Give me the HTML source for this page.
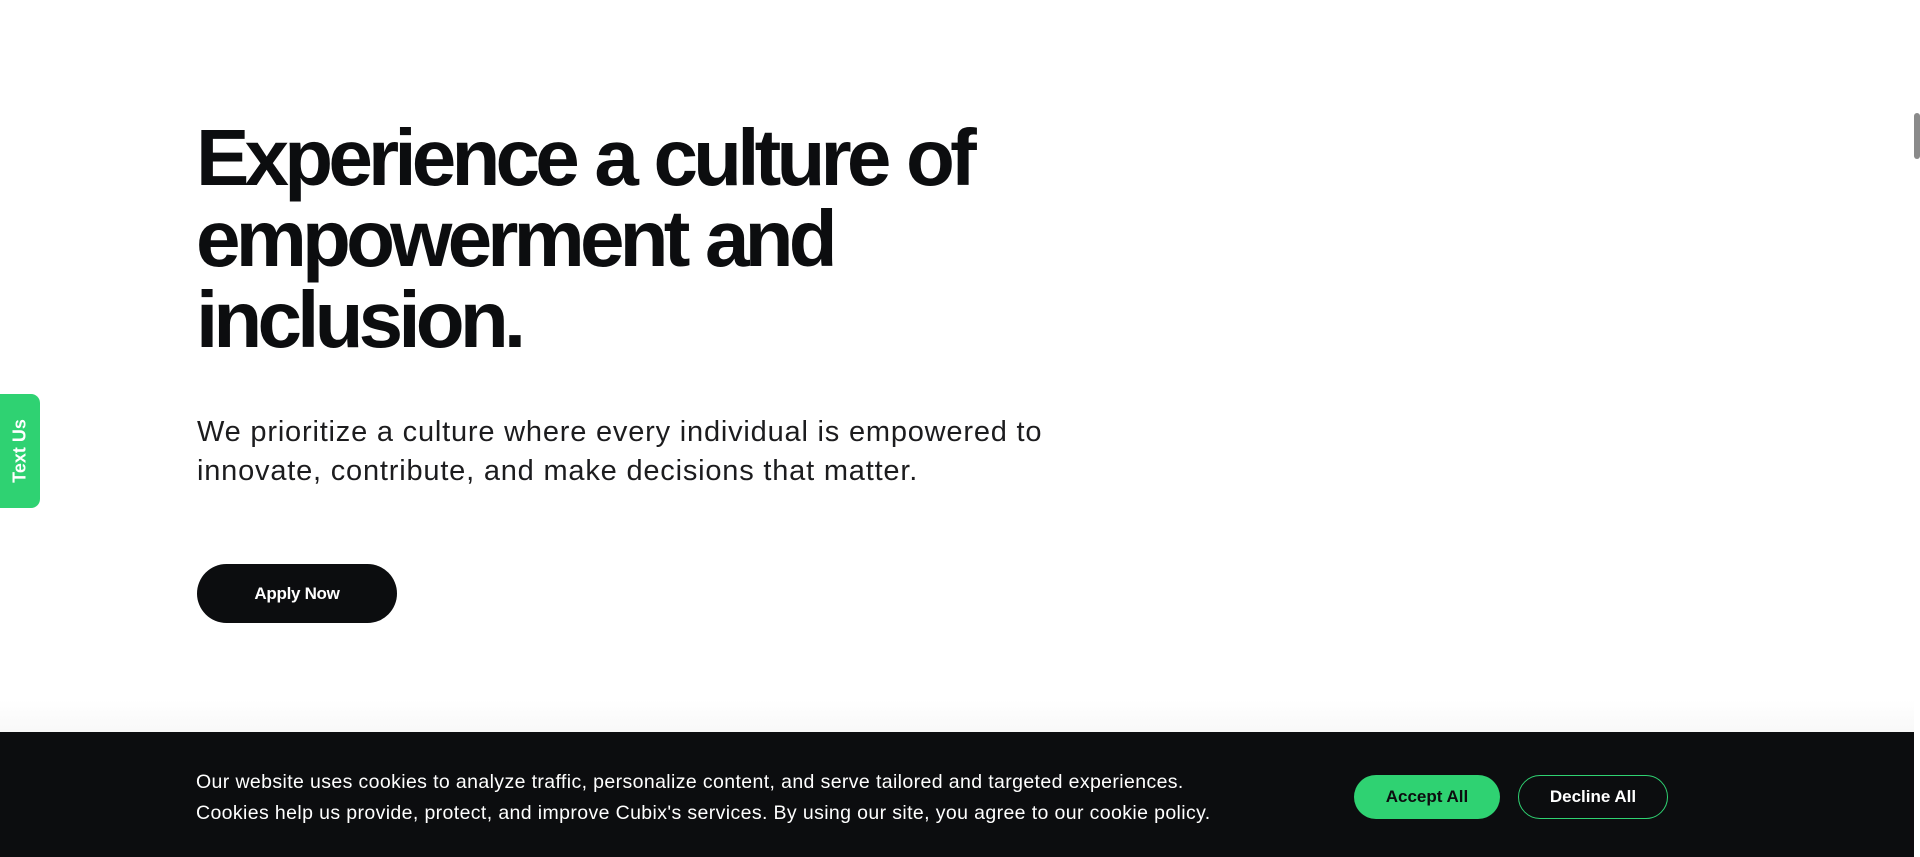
<!DOCTYPE html>
<html><head><meta charset="utf-8"><style>
html,body{margin:0;padding:0;width:1920px;height:857px;overflow:hidden;background:#fff;font-family:"Liberation Sans",sans-serif;}
.h{position:absolute;left:196px;top:117px;margin:0;font-size:80px;line-height:81px;font-weight:700;letter-spacing:-4.8px;word-spacing:2px;color:#0c0d0f;}
.p{position:absolute;left:197px;top:413px;margin:0;font-size:29px;line-height:39px;color:#1c1c1e;letter-spacing:0.8px;}
.btn{position:absolute;left:197px;top:564px;width:200px;height:59px;border-radius:30px;background:#0c0d0f;color:#fff;font-weight:700;font-size:17px;display:flex;align-items:center;justify-content:center;letter-spacing:-0.3px;}
.tab{position:absolute;left:0;top:394px;width:40px;height:114px;background:#2fd272;border-radius:0 9px 9px 0;}
.tab span{position:absolute;left:50%;top:50%;transform:translate(-50%,-50%) rotate(-90deg);color:#fff;font-weight:700;font-size:18px;white-space:nowrap;}
.sb{position:absolute;left:1914px;top:113px;width:6px;height:46px;background:#8a8a8a;border-radius:3px;}
.shadow{position:absolute;left:0;top:700px;width:1914px;height:32px;background:linear-gradient(#fff,#f8f8f8);}
.ck{position:absolute;left:0;top:732px;width:1914px;height:125px;background:#0c0d0f;}
.ck p{position:absolute;left:196px;top:35px;margin:0;color:#fff;font-size:19.5px;line-height:31px;letter-spacing:0.38px;}
.acc{position:absolute;left:1354px;top:43px;width:146px;height:44px;border-radius:22px;background:#2fd272;color:#0c0d0f;font-size:17px;font-weight:700;display:flex;align-items:center;justify-content:center;}
.dec{position:absolute;left:1518px;top:43px;width:148px;height:42px;border-radius:22px;border:1px solid #2fd272;color:#fff;font-size:17px;font-weight:700;display:flex;align-items:center;justify-content:center;}
</style></head><body>
<h1 class="h">Experience a culture of<br>empowerment and<br>inclusion.</h1>
<p class="p">We prioritize a culture where every individual is empowered to<br>innovate, contribute, and make decisions that matter.</p>
<div class="btn">Apply Now</div>
<div class="tab"><span>Text Us</span></div>
<div class="sb"></div>
<div class="shadow"></div>
<div class="ck">
<p>Our website uses cookies to analyze traffic, personalize content, and serve tailored and targeted experiences.<br>Cookies help us provide, protect, and improve Cubix's services. By using our site, you agree to our cookie policy.</p>
<div class="acc">Accept All</div>
<div class="dec">Decline All</div>
</div>
</body></html>
